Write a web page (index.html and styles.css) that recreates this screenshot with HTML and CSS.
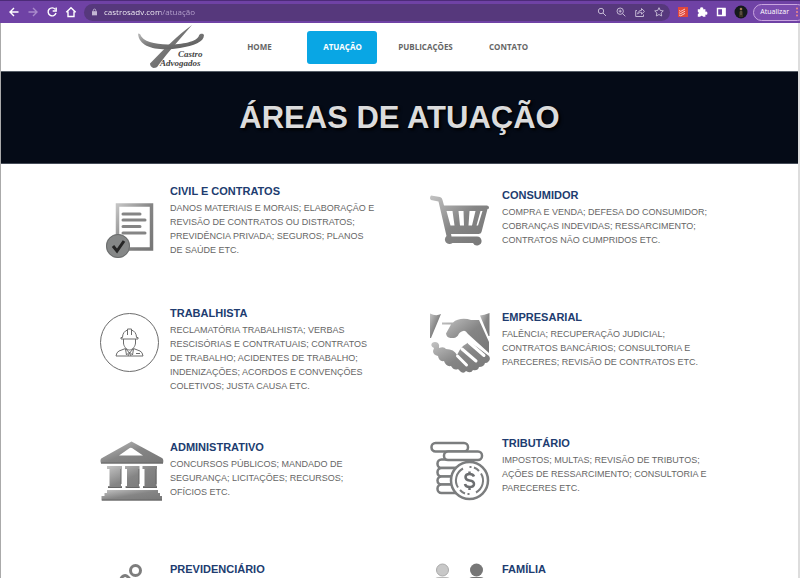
FILE: index.html
```html
<!DOCTYPE html>
<html lang="pt-BR">
<head>
<meta charset="utf-8">
<meta name="viewport" content="width=device-width, initial-scale=1">
<title>Castro Advogados</title>
<link rel="stylesheet" href="styles.css">
</head>
<body>
<div class="browser">
  <button class="tool" aria-label="Voltar"><svg viewBox="0 0 12 12"><path d="M10.500 6H2M6 2L2 6l4 4"/></svg></button>
  <button class="tool dim" aria-label="Avançar"><svg viewBox="0 0 12 12"><path d="M1.500 6H10M6 2l4 4-4 4"/></svg></button>
  <button class="tool" aria-label="Recarregar"><svg viewBox="0 0 12 12"><path d="M9.300 3.400A4 4 0 1 0 10 7M10.200 1.500V5H6.700"/></svg></button>
  <button class="tool" aria-label="Início"><svg viewBox="0 0 12 12"><path d="M1.300 6.300L6 1.700l4.700 4.600M3 5.500v5h6v-5"/></svg></button>
  <form class="omnibox">
    <svg class="lock" viewBox="0 0 6 8"><path d="M0 3h6v5H0z" fill="#c3b7d3"/><path d="M1.500 3V2a1.500 1.500 0 0 1 3 0v1" fill="none" stroke="#c3b7d3"/></svg>
    <input class="url" type="text" aria-label="Endereço" value="castrosadv.com/atuação">
    <button type="button" class="tool soft" aria-label="Pesquisar"><svg viewBox="0 0 12 12"><circle cx="5" cy="5" r="2.700"/><path d="M7 7l3 3"/></svg></button>
    <button type="button" class="tool soft" aria-label="Zoom"><svg viewBox="0 0 12 12"><circle cx="5.200" cy="5.200" r="3.200"/><path d="M7.500 7.500l2.800 2.800M3.700 5.200h3M5.200 3.700v3"/></svg></button>
    <button type="button" class="tool soft" aria-label="Compartilhar"><svg viewBox="0 0 12 12"><path d="M3 4.500H1.700v6h7.800V8.500M3.700 8C4 5.500 5.500 4.500 7.500 4.400V2.500l3 2.900-3 2.800V6.300C6 6.300 4.700 6.800 3.700 8z"/></svg></button>
    <button type="button" class="tool soft" aria-label="Favoritar"><svg viewBox="0 0 12 12"><path d="M6 1.700l1.300 2.800 3 .4-2.200 2.100.6 3L6 8.500 3.300 10l.6-3-2.200-2.100 3-.4z"/></svg></button>
  </form>
  <button class="tool" aria-label="Tarefas"><svg viewBox="0 0 12 12"><path d="M1 1h10v10H1z" fill="#e1483c" stroke="none"/><path d="M2 4.500l1.700.9L8 3M2 6.700l1.700.9L8 5.200M2 8.900l1.700.9L8 7.400" stroke="#ffd9d2" stroke-width=".9"/></svg></button>
  <button class="tool" aria-label="Extensões"><svg viewBox="0 0 12 12"><path d="M1.800 3.300h2.500a1.500 1.500 0 1 1 2.800 0h2.300v2.500a1.500 1.500 0 1 1 0 2.800v2.200H7a1.400 1.400 0 0 0-2.700 0H1.800V8.300a1.300 1.300 0 0 0 0-2.500z" fill="#fff" stroke="none"/></svg></button>
  <button class="tool" aria-label="Painel lateral"><svg viewBox="0 0 12 12"><path d="M2.500 2.500h7.500v7H2.500z"/><path d="M7 2h3.500v8H7z" fill="#fff" stroke="none"/></svg></button>
  <button class="tool" aria-label="Perfil"><svg class="avatar" viewBox="0 0 14 14"><circle cx="7" cy="7" r="6.500" fill="#151a1c" stroke="none"/><path d="M5 12V7l1.500-1.500h1.500L9 7v5z" fill="#3b3021" stroke="none"/><circle cx="7" cy="4" r="1.300" fill="#a07b55" stroke="none"/><path d="M7 6v4" stroke="#8b877b" stroke-width=".7"/></svg></button>
  <button class="update">Atualizar <svg viewBox="0 0 2 10"><circle cx="1" cy="1.500" r="1"/><circle cx="1" cy="5" r="1"/><circle cx="1" cy="8.500" r="1"/></svg></button>
</div>

<div class="page">
  <header class="site-header">
    <a class="logo" href="#" aria-label="Castro Advogados">
      <svg viewBox="0 0 72 46">
        <defs><linearGradient id="steel" x1="0" y1="0" x2="1" y2="1"><stop offset="0" stop-color="#bbb"/><stop offset=".45" stop-color="#777"/><stop offset="1" stop-color="#555"/></linearGradient></defs>
        <path d="M56 1C42 11 27 26 14 39.500q0 3 3.500 4.500c3 0 4-1 5-3C33 27 44 15 56 1z" fill="url(#steel)"/>
        <path d="M2 9.500c1 15 22 18 42 14.500 14-2.500 24-6 24-13-1-2-4.500-1.500-5 .5C61 18 46 20.500 32 20.500 18 20 7 18 4 10z" fill="url(#steel)"/>
        <text x="42" y="33">Castro</text>
        <text x="24" y="42">Advogados</text>
      </svg>
    </a>
    <nav class="menu">
      <a href="#">HOME</a>
      <a class="active" href="#">ATUAÇÃO</a>
      <a href="#">PUBLICAÇÕES</a>
      <a href="#">CONTATO</a>
    </nav>
  </header>

  <div class="banner"><h1>ÁREAS DE ATUAÇÃO</h1></div>

  <main class="areas">
    <svg class="defs" aria-hidden="true">
      <defs>
        <linearGradient id="metal" x1="0" y1="0" x2="1" y2="1"><stop offset="0" stop-color="#c4c4c4"/><stop offset=".5" stop-color="#858585"/><stop offset="1" stop-color="#777"/></linearGradient>
      </defs>
    </svg>

    <article class="card">
      <svg class="icon" viewBox="0 0 66 78">
        <path d="M19.500 21h34v44h-34z" fill="#fff" stroke="url(#metal)" stroke-width="3.500"/>
        <path d="M25 30h17M25 36h22M25 42.500h17M25 49h22" stroke="#858585" stroke-width="3" stroke-linecap="round"/>
        <circle cx="20" cy="62" r="12" fill="#858787"/><circle cx="20" cy="62" r="11.500" fill="none" stroke="#6b6d6d"/>
        <path d="M15 62l4 5 7-10" fill="none" stroke="#252525" stroke-width="3"/>
      </svg>
      <div class="text">
        <h2>CIVIL E CONTRATOS</h2>
        <p>DANOS MATERIAIS E MORAIS; ELABORAÇÃO E REVISÃO DE CONTRATOS OU DISTRATOS; PREVIDÊNCIA PRIVADA; SEGUROS; PLANOS DE&nbsp;SAÚDE ETC.</p>
      </div>
    </article>

    <article class="card">
      <svg class="icon" viewBox="0 0 66 78">
        <path fill="url(#metal)" fill-rule="evenodd" d="M1 11.500L10 13q2 .5 2.500 3L14 21.500h43q2.500.5 2 3l-1.500.5-6 23q-.5 2-3 2H21l.5 2.500H47a4.500 4.500 0 1 1-4 6.500H22.500a4.500 4.500 0 1 1-6-7L8.500 17.500 1 16q-2-2 0-4.500zM16.500 27l4 14.500h4l-2-14.500zM28.500 27l1.500 14.500h4l-.5-14.500zM39.500 27l-1 14.500h3.500l3.500-14.500zM50.500 27l-4 14.500h1.500l4.500-14.500z"/>
      </svg>
      <div class="text low">
        <h2>CONSUMIDOR</h2>
        <p>COMPRA E VENDA; DEFESA DO CONSUMIDOR; COBRANÇAS INDEVIDAS; RESSARCIMENTO; CONTRATOS NÃO CUMPRIDOS ETC.</p>
      </div>
    </article>

    <article class="card">
      <svg class="icon" viewBox="0 0 66 78">
        <g fill="none" stroke="#6c6c6c">
          <circle cx="31.500" cy="36.500" r="29"/>
          <path d="M23 33h17v-1.500h-1.500c0-4-2-6.500-5-7.500V23h-4v1c-3 1-5 3.500-5 7.500H23zM29.500 24v5M33.500 24v5M25.500 33v4c0 3 3 7 6 7s6-4 6-7v-4"/>
          <path d="M27.500 42.500L21 45q-2.500 1-3 5h27q-.5-4-3-5l-6.500-2.500M27.500 42.500l4 4.500 4-4.500M27.500 43l1 6 3-3 3 3 1-6M30 50l1.500-3 1.500 3M38 47.500h4"/>
        </g>
      </svg>
      <div class="text">
        <h2>TRABALHISTA</h2>
        <p>RECLAMATÓRIA TRABALHISTA; VERBAS RESCISÓRIAS E CONTRATUAIS; CONTRATOS DE TRABALHO; ACIDENTES DE TRABALHO; INDENIZAÇÕES; ACORDOS E CONVENÇÕES COLETIVOS; JUSTA CAUSA ETC.</p>
      </div>
    </article>

    <article class="card">
      <svg class="icon" viewBox="0 0 66 78">
        <g fill="url(#metal)">
          <path d="M0 7.500q6 3 11 .5L1 32H0z"/>
          <path d="M50 9.500Q54 9 59.500 7v23h-1z"/>
          <path d="M12 16.500h11c4-4 12-4.500 18-2.500h8l10 22v11L38 28q-3-4.500-5-3-4 1-5 4.500-2 3-7.500 2.500-4-.5-4.500-4.500L21 18.500h-9z"/>
          <path d="M2 37q3-2 6 0 2 2 1 5 5-2 7 1 8 0 11 6 2-5 6-9l6-4 8 5 12 9q2 3-.5 5.500-1 1.500-3.500 1.500-1 4-6 4-1 4-6 3-2 4-7 1-2 3-5 1l-3-3q-4 2-7-3-5 1-7-5-5 1-6-5-5-1-5-5l1-3q-4-2-2-5z"/>
        </g>
        <path d="M39 36.500l15 13M32 43l14 12M27.500 50l9 9" stroke="#fff" stroke-width="3" stroke-linecap="round"/>
      </svg>
      <div class="text low">
        <h2>EMPRESARIAL</h2>
        <p>FALÊNCIA; RECUPERAÇÃO JUDICIAL; CONTRATOS BANCÁRIOS; CONSULTORIA E PARECERES; REVISÃO DE CONTRATOS ETC.</p>
      </div>
    </article>

    <article class="card">
      <svg class="icon" viewBox="0 0 66 78">
        <g fill="url(#metal)">
          <path fill-rule="evenodd" d="M33.500 5.500L64 22q2 1 1 5.500H3Q1.500 23 4 22zM21 19.500h24L34 12q-2-.5-3 .5z"/>
          <path d="M9 30h15v3h-1v17H24v2H10v-2h1.500V33H9zM27 30h14.500v3H41v17h.5v2h-14v-2H29V33h-2zM44.500 30H59v3h-.5v17h.5v2H45v-2h1.500V33h-2z"/>
          <path d="M9 54h51v3h2v3h2v4.500H3.500V60h3v-3H9z"/>
        </g>
        <path d="M3 27h62M10 51.500h14M28 51.500h13.500M45 51.500h14M4 64h60M23 33v15M41 33v15M58 33v15" stroke="#666"/>
      </svg>
      <div class="text low">
        <h2>ADMINISTRATIVO</h2>
        <p>CONCURSOS PÚBLICOS; MANDADO DE SEGURANÇA; LICITAÇÕES; RECURSOS; OFÍCIOS ETC.</p>
      </div>
    </article>

    <article class="card">
      <svg class="icon" viewBox="0 0 66 78">
        <g fill="#fff" stroke="#7b7d7e" stroke-width="2.500">
          <rect x="1.500" y="7" width="36.500" height="8.500" rx="4"/>
          <rect x="7.500" y="23.500" width="36" height="8.500" rx="4"/>
          <rect x="7.500" y="32" width="36" height="8.500" rx="4"/>
          <rect x="7.500" y="40.500" width="36" height="8" rx="4"/>
          <rect x="7.500" y="48.500" width="36" height="8.500" rx="4"/>
          <rect x="14" y="15.500" width="38" height="8.500" rx="4"/>
          <circle cx="39.500" cy="44.500" r="18.500"/>
        </g>
        <path d="M33 32.500a13.500 13.500 0 0 0-5 19M30 54a13.500 13.500 0 0 0 5 3.500M46 56.500a13.500 13.500 0 0 0 5-19M49 35a13.500 13.500 0 0 0-5-3.500M37.500 58h2M39.500 31h2" fill="none" stroke="#7b7d7e" stroke-width="2"/>
        <path d="M44 40.500q-1-2.500-4.500-2.500-4 0-4 3t4 3.500q4.500.5 4.500 3.500t-4.500 3q-4 0-4.500-3M39.500 35.500v3M39.500 51v3" fill="none" stroke="#6c6e70" stroke-width="2.500"/>
      </svg>
      <div class="text">
        <h2>TRIBUTÁRIO</h2>
        <p>IMPOSTOS; MULTAS; REVISÃO DE TRIBUTOS; AÇÕES DE RESSARCIMENTO; CONSULTORIA E PARECERES ETC.</p>
      </div>
    </article>

    <article class="card">
      <svg class="icon" viewBox="0 0 66 78">
        <g fill="none" stroke="#7d7d7d" stroke-width="3"><circle cx="37.500" cy="8.500" r="5"/><path d="M22 20c1-6 5-8 8-5s2 4 5 5"/></g>
      </svg>
      <div class="text"><h2>PREVIDENCIÁRIO</h2></div>
    </article>

    <article class="card">
      <svg class="icon" viewBox="0 0 66 78">
        <circle cx="12.500" cy="8" r="6" fill="#c8c8c8" stroke="#aaa"/><circle cx="46.500" cy="8" r="6.500" fill="#777"/>
        <path d="M4 30V20q0-5 5-5h7q5 0 5 5v10z" fill="#bbb"/><path d="M38 30V20q0-5 5-5h7q5 0 5 5v10z" fill="#777"/>
      </svg>
      <div class="text"><h2>FAMÍLIA</h2></div>
    </article>
  </main>
</div>
</body>
</html>
```
FILE: styles.css
```css
* { box-sizing: border-box; }

html, body { height: 100%; }

body {
  margin: 0;
  display: flex;
  flex-direction: column;
  overflow: hidden;
  background: #fff;
  font-family: "Liberation Sans", Arial, sans-serif;
}

button { border: 0; background: none; font: inherit; }

.browser {
  display: flex;
  flex: none;
  align-items: center;
  gap: 7px;
  height: 23px;
  padding-left: 8px;
  border-top: 1px solid #4c2b78;
  background: #6f42a5;
  overflow: hidden;
}

.tool {
  display: grid;
  flex: none;
  place-items: center;
  width: 12px;
  height: 16px;
  padding: 0;
}

.tool svg {
  width: 12px;
  height: 12px;
  fill: none;
  stroke: #fff;
  stroke-width: 1.4;
}

.tool .avatar { width: 14px; height: 14px; }
.dim svg { stroke: #a98bcb; }
.soft svg { stroke: #c3b7d3; stroke-width: 1; }

.omnibox {
  display: flex;
  flex: 1;
  align-items: center;
  gap: 7px;
  min-width: 0;
  height: 17px;
  margin: 0;
  padding: 0 5px 0 8px;
  border-radius: 9px;
  background: #56387c;
}

.lock { flex: none; width: 5px; height: 8px; }

.url {
  flex: 1;
  min-width: 0;
  padding: 0;
  border: 0;
  outline: 0;
  background: linear-gradient(90deg, #fff 57px, #b9a6d0 57px);
  background-clip: text;
  -webkit-background-clip: text;
  -webkit-text-fill-color: transparent;
  font: 8px/12px "Open Sans", sans-serif;
}

.update {
  display: flex;
  flex: none;
  align-items: center;
  gap: 7px;
  height: 17px;
  margin-right: -6px;
  padding: 0 7px 0 6px;
  border: 1px solid #c9a5df;
  border-radius: 9px;
  background: #7b4caf;
  color: #fff;
  font: 7px/12px "Open Sans", sans-serif;
}

.update svg { width: 2px; height: 10px; fill: #f08a8a; }

.page {
  flex: 1;
  min-height: 0;
  border-left: 1px solid #aaa;
  border-right: 2px solid #ddd;
  overflow: hidden;
}

.site-header {
  display: flex;
  align-items: center;
  gap: 16px;
  height: 48px;
  padding-left: 17%;
}

.logo { flex: none; height: 46px; }
.logo svg { width: 72px; height: 46px; }

.logo text {
  fill: #444;
  font: italic bold 9px "Liberation Serif", serif;
}

.menu { display: flex; gap: 13px; }

.menu a {
  display: flex;
  align-items: center;
  justify-content: center;
  width: 70px;
  height: 33px;
  border-radius: 3px;
  color: #666;
  font: bold 8px/12px "Open Sans", sans-serif;
  text-decoration: none;
}

.menu .active { background: #09a6e4; color: #fff; }

.banner {
  display: flex;
  align-items: center;
  justify-content: center;
  height: 93px;
  border-top: 1px solid #555d66;
  border-bottom: 1px solid #444b57;
  background: #050b17;
}

.banner h1 {
  margin: 0;
  color: #dcdcdc;
  font-size: 31px;
  line-height: 40px;
  text-shadow: 2px 2px 3px #000;
}

.areas {
  display: grid;
  grid-template-columns: 1fr 1fr;
  grid-template-rows: 122px 130px 126px;
  column-gap: 48px;
  max-width: 629px;
  margin: 0 auto;
  padding: 20px 0 0 13px;
}

.defs { position: absolute; width: 0; height: 0; }

.card { display: flex; gap: 6px; }
.icon { flex: none; width: 66px; height: 78px; }
.text { flex: 1; }
.low { padding-top: 4px; }

.card h2 {
  margin: 0 0 3px;
  color: #203c70;
  font-size: 11px;
  line-height: 14px;
}

.card p {
  margin: 0;
  color: #666;
  font-size: 9px;
  line-height: 14px;
}
```
